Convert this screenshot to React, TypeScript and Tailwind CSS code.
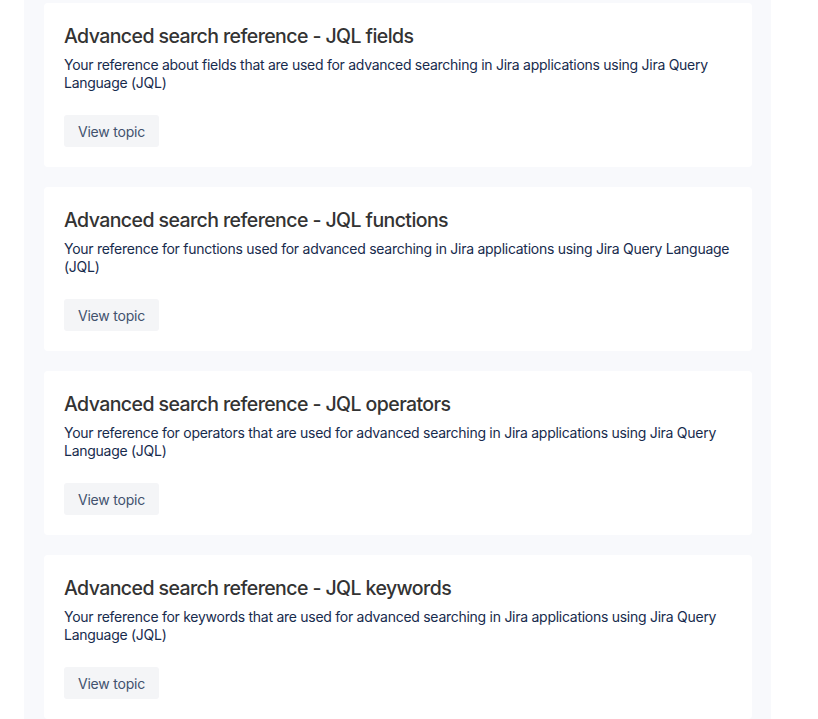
import React from "react";

const items = [
  {
    title: "Advanced search reference - JQL fields",
    desc: "Your reference about fields that are used for advanced searching in Jira applications using Jira Query Language (JQL)",
  },
  {
    title: "Advanced search reference - JQL functions",
    desc: "Your reference for functions used for advanced searching in Jira applications using Jira Query Language (JQL)",
  },
  {
    title: "Advanced search reference - JQL operators",
    desc: "Your reference for operators that are used for advanced searching in Jira applications using Jira Query Language (JQL)",
  },
  {
    title: "Advanced search reference - JQL keywords",
    desc: "Your reference for keywords that are used for advanced searching in Jira applications using Jira Query Language (JQL)",
  },
];

export default function App() {
  return (
    <div
      className="w-[818px] h-[719px] overflow-hidden bg-white"
      style={{ fontFamily: "Inter, 'Noto Sans', sans-serif" }}
    >
      <div className="ml-[24px] w-[747px] h-full bg-[#f8f9fc] pl-[20px] pr-[19px] pt-[3px] flex flex-col gap-[20px]">
        {items.map((it) => (
          <div key={it.title} className="bg-white rounded-[4px] px-[20px] pt-[21px] pb-[20px] h-[164px] shrink-0 flex flex-col">
            <h2 className="text-[19.5px] leading-[24px] text-[#333333] font-medium tracking-[-0.58px]">{it.title}</h2>
            <p className="mt-[8px] text-[14px] leading-[17.5px] text-[#172b4d] tracking-[-0.27px]">{it.desc}</p>
            <div className="mt-auto">
              <button className="h-[32px] w-[95px] rounded-[3px] bg-[#f4f5f7] text-[14px] text-[#42526e] tracking-[-0.2px]">View topic</button>
            </div>
          </div>
        ))}
      </div>
    </div>
  );
}
